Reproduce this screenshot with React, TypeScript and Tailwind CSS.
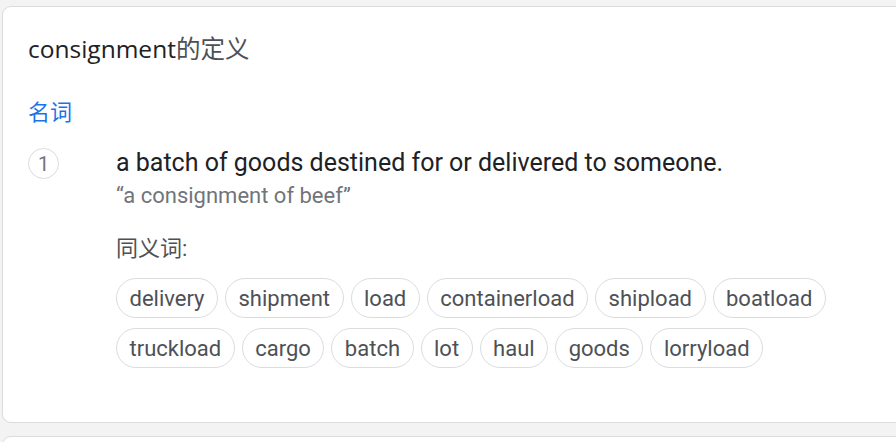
import React from 'react';

const synonyms: string[][] = [
  ['delivery', 'shipment', 'load', 'containerload', 'shipload', 'boatload'],
  ['truckload', 'cargo', 'batch', 'lot', 'haul', 'goods', 'lorryload'],
];

const Chip: React.FC<{ label: string }> = ({ label }) => (
  <span className="inline-flex items-center h-10 px-[12.5px] rounded-full border border-[#dadce0] bg-white text-[22px] text-[#4d5156]">
    {label}
  </span>
);

const App: React.FC = () => {
  return (
    <div className="w-[896px] h-[442px] overflow-hidden bg-[#f3f3f3] pt-[6px] pl-[2px] font-['Roboto','Noto_Sans_CJK_SC',sans-serif]">
      <div className="w-[920px] h-[417px] bg-white border border-[#dadce0] rounded-[9px] pl-[25px] pt-[22px]">
        <h1 className="text-[24.5px] leading-[40px] text-[#202124] font-['Open_Sans','Noto_Sans_CJK_SC',sans-serif]">
          consignment<span className="text-[#4d5156]">的定义</span>
        </h1>

        <div className="mt-[29px] text-[22px] leading-[30px] text-[#1a73e8]">名词</div>

        <div className="flex mt-[20px]">
          <div className="w-[88px] shrink-0">
            <div className="w-[31px] h-[31px] rounded-full border border-[#dadce0] flex items-center justify-center text-[20px] text-[#70757a]">
              1
            </div>
          </div>
          <div>
            <p className="text-[25px] leading-[30px] text-[#202124]">
              a batch of goods destined for or delivered to someone.
            </p>
            <p className="text-[22px] leading-[30px] text-[#70757a] mt-[3px]">“a consignment of beef”</p>

            <div className="mt-[23px] text-[22px] leading-[30px] text-[#4d5156]">同义词:</div>
            <div className="mt-[14px] flex flex-col gap-[10px]">
              {synonyms.map((row, i) => (
                <div key={i} className="flex gap-[7px]">
                  {row.map(s => (
                    <Chip key={s} label={s} />
                  ))}
                </div>
              ))}
            </div>
          </div>
        </div>
      </div>
      <div className="w-[920px] h-[40px] bg-white border border-[#dadce0] rounded-[9px] mt-[13px]" />
    </div>
  );
};

export default App;
